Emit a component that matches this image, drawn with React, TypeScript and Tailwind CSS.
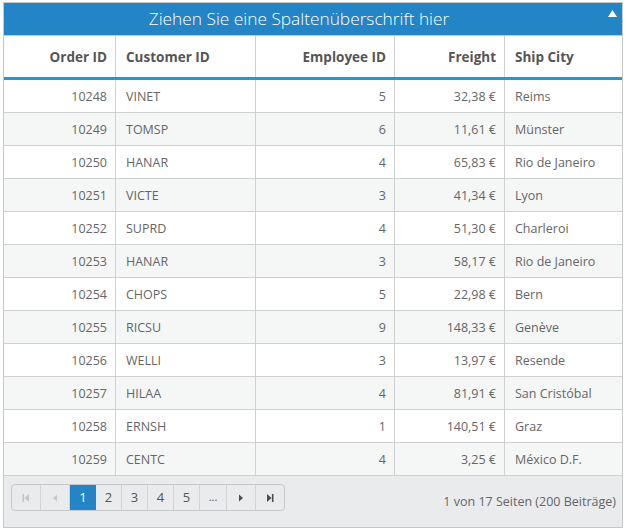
const rows = [
  ['10248', 'VINET', '5', '32,38 €', 'Reims'],
  ['10249', 'TOMSP', '6', '11,61 €', 'Münster'],
  ['10250', 'HANAR', '4', '65,83 €', 'Rio de Janeiro'],
  ['10251', 'VICTE', '3', '41,34 €', 'Lyon'],
  ['10252', 'SUPRD', '4', '51,30 €', 'Charleroi'],
  ['10253', 'HANAR', '3', '58,17 €', 'Rio de Janeiro'],
  ['10254', 'CHOPS', '5', '22,98 €', 'Bern'],
  ['10255', 'RICSU', '9', '148,33 €', 'Genève'],
  ['10256', 'WELLI', '3', '13,97 €', 'Resende'],
  ['10257', 'HILAA', '4', '81,91 €', 'San Cristóbal'],
  ['10258', 'ERNSH', '1', '140,51 €', 'Graz'],
  ['10259', 'CENTC', '4', '3,25 €', 'México D.F.'],
]

const cols = [
  { label: 'Order ID', w: 'w-[112px]', align: 'justify-end pr-[8px]' },
  { label: 'Customer ID', w: 'w-[140px]', align: 'justify-start pl-[10px]' },
  { label: 'Employee ID', w: 'w-[139px]', align: 'justify-end pr-[8px]' },
  { label: 'Freight', w: 'w-[110px]', align: 'justify-end pr-[8px]' },
  { label: 'Ship City', w: 'w-[117px]', align: 'justify-start pl-[10px]' },
]

function PagerIcon({ kind, off }: { kind: 'first' | 'prev' | 'next' | 'last'; off?: boolean }) {
  const c = off ? '#c4c6c8' : '#4d4d4d'
  return (
    <svg width="10" height="10" viewBox="0 0 10 10">
      {kind === 'first' && <><rect x="1.5" y="1" width="1.6" height="8" fill={c} /><path d="M8 1 L3.5 5 L8 9 Z" fill={c} /></>}
      {kind === 'prev' && <path d="M7 1.5 L3 5 L7 8.5 Z" fill={c} />}
      {kind === 'next' && <path d="M3 1.5 L7 5 L3 8.5 Z" fill={c} />}
      {kind === 'last' && <><path d="M2 1 L6.5 5 L2 9 Z" fill={c} /><rect x="6.9" y="1" width="1.6" height="8" fill={c} /></>}
    </svg>
  )
}

export default function App() {
  const font = { fontFamily: '"Open Sans", "Segoe UI", sans-serif' }
  return (
    <div className="pt-[2px] pl-[3px] bg-white" style={font}>
      <div className="w-[620px] border border-[#c8c8c8] bg-white">
        <div className="relative h-[32px] bg-[#2384c6] flex items-center justify-center pr-[28px] border-b border-[#c8c8c8] box-content">
          <span className="text-white text-[17.3px] font-light">Ziehen Sie eine Spaltenüberschrift hier</span>
          <svg className="absolute right-[5px] top-[7px]" width="9" height="7" viewBox="0 0 9 7"><path d="M4.5 0 L9 7 L0 7 Z" fill="#fff" /></svg>
        </div>
        <div className="flex h-[41px] border-b-[3px] border-[#1e9bd7] box-content">
          {cols.map((c, i) => (
            <div key={c.label} className={`${c.w} flex items-center pt-[2px] ${c.align} ${i < 4 ? 'border-r border-[#d0d0d0]' : ''} text-[13.5px] font-bold text-[#555]`}>
              {c.label}
            </div>
          ))}
        </div>
        {rows.map((r, ri) => (
          <div key={r[0]} className={`flex h-[32px] border-b border-[#d0d0d0] box-content ${ri % 2 ? 'bg-[#f5f6f6]' : 'bg-white'}`}>
            {r.map((v, i) => (
              <div key={i} className={`${cols[i].w} flex items-center pt-[2px] ${cols[i].align} ${i < 4 ? 'border-r border-[#d0d0d0]' : ''} text-[12.5px] text-[#666]`}>
                {v}
              </div>
            ))}
          </div>
        ))}
        <div className="h-[51px] bg-[#eaebed] flex items-start justify-between pl-[7px] pr-[6px] pt-[8px]">
          <div className="flex h-[27px] border border-[#c6c8ca] rounded-[4px] overflow-hidden text-[13px] text-[#555]">
            <div className="w-[29px] flex items-center justify-center border-r border-[#d0d2d4]"><PagerIcon kind="first" off /></div>
            <div className="w-[29px] flex items-center justify-center border-r border-[#d0d2d4]"><PagerIcon kind="prev" off /></div>
            <div className="w-[26px] flex items-center justify-center bg-[#2384c6] text-white">1</div>
            {['2', '3', '4', '5'].map(p => (
              <div key={p} className="w-[26px] flex items-center justify-center border-r border-[#d0d2d4]">{p}</div>
            ))}
            <div className="w-[27px] flex items-center justify-center border-r border-[#d0d2d4] text-[11px]">...</div>
            <div className="w-[29px] flex items-center justify-center border-r border-[#d0d2d4]"><PagerIcon kind="next" /></div>
            <div className="w-[28px] flex items-center justify-center"><PagerIcon kind="last" /></div>
          </div>
          <span className="self-center mb-[6px] text-[12.5px] text-[#666]">1 von 17 Seiten (200 Beiträge)</span>
        </div>
      </div>
    </div>
  )
}
